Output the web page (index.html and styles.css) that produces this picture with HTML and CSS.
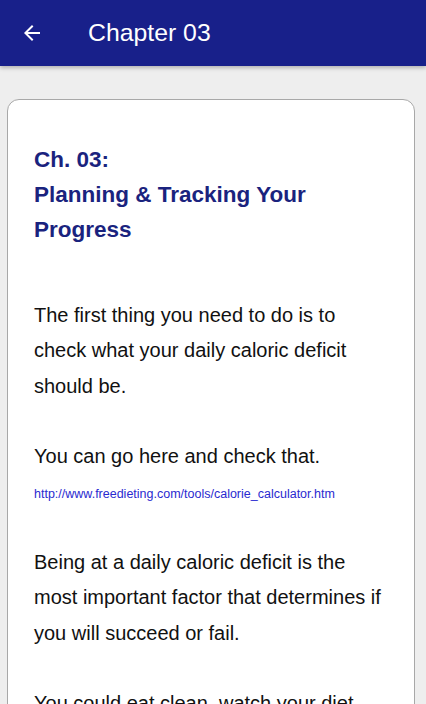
FILE: index.html
```html
<!DOCTYPE html>
<html lang="en">
<head>
    <meta charset="UTF-8">
    <meta name="viewport" content="width=device-width, initial-scale=1.0">
    <title>Chapter 03</title>
    <link rel="stylesheet" href="styles.css">
</head>
<body>

    <!-- Barra superior -->
    <div class="toolbar">
        <button class="back" aria-label="Back">
            <svg width="24" height="24" viewBox="0 0 24 24">
                <path fill="#fff" d="M20 11H7.83l5.59-5.59L12 4l-8 8 8 8 1.41-1.41L7.83 13H20v-2z"/>
            </svg>
        </button>
        <div class="title">Chapter 03</div>
    </div>

    <div class="page">
        <div class="card">
            <h2 class="heading">Ch. 03:<br>Planning &amp; Tracking Your Progress</h2>

            <div class="content">
                The first thing you need to do is to check what your daily caloric deficit should be.<br>
                <br>
                You can go here and check that.<br>
                <a class="link" href="#">http://www.freedieting.com/tools/calorie_calculator.htm</a><br>
                <br>
                Being at a daily caloric deficit is the most important factor that determines if you will succeed or fail.<br>
                <br>
                You could eat clean, watch your diet, exercise every day and still not lose weight if you are not at a caloric deficit.
            </div>
        </div>
    </div>

</body>
</html>
```

FILE: styles.css
```css
body {
    margin: 0;
    padding: 0;
    background-color: #eeeeee;
    font-family: 'Liberation Sans', Arial, sans-serif;
    overflow: hidden;
}

.toolbar {
    height: 66px;
    background-color: #18208a;
    display: flex;
    align-items: center;
    box-shadow: 0 2px 4px rgba(0, 0, 0, 0.25);
    position: relative;
    z-index: 2;
}

.back {
    width: 24px;
    height: 24px;
    margin-left: 20px;
    padding: 0;
    border: none;
    background: none;
    display: flex;
}

.title {
    margin-left: 44px;
    margin-bottom: 1px;
    color: #ffffff;
    font-size: 24.8px;
}

.page {
    padding: 33px 11px 0 7px;
}

.card {
    background-color: #ffffff;
    border: 1px solid #a8a8a8;
    border-radius: 12px;
    padding: 42px 25px 40px 26px;
}

.heading {
    margin: 0;
    font-size: 22.5px;
    line-height: 35px;
    color: #1a237e;
    font-weight: bold;
    padding-right: 60px;
}

.content {
    margin-top: 51px;
    font-size: 20px;
    line-height: 35.3px;
    color: #111111;
}

.link {
    font-size: 12.5px;
    line-height: 1;
    color: #2a2ad0;
    text-decoration: none;
}
```
